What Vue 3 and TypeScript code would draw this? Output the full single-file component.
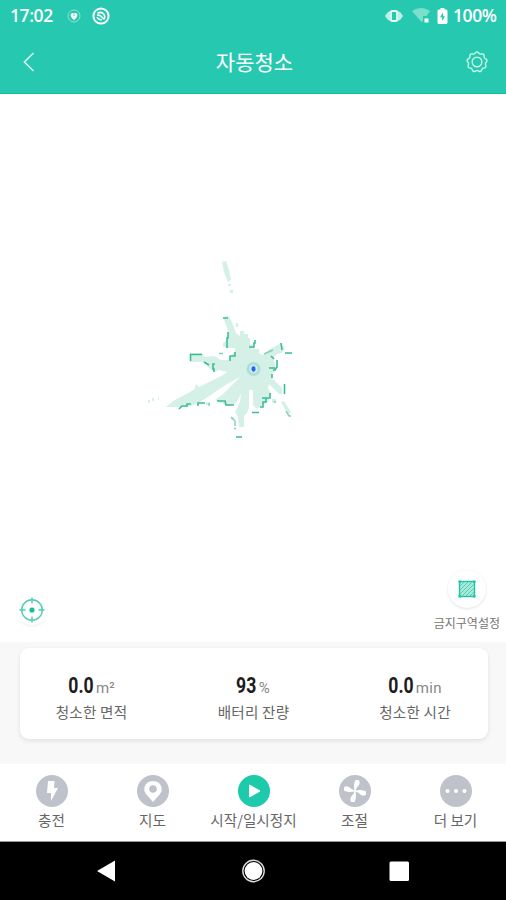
<script setup lang="ts">
interface Stat { value: string; unit: string; label: string }
interface Tab { icon: string; label: string; active?: boolean }

const stats: Stat[] = [
  { value: '0.0', unit: 'm²', label: '청소한 면적' },
  { value: '93', unit: '%', label: '배터리 잔량' },
  { value: '0.0', unit: 'min', label: '청소한 시간' },
]
const tabs: Tab[] = [
  { icon: 'charge', label: '충전' },
  { icon: 'map', label: '지도' },
  { icon: 'play', label: '시작/일시정지', active: true },
  { icon: 'fan', label: '조절' },
  { icon: 'more', label: '더 보기' },
]

// Scalloped outline of the settings gear.
const gear = Array.from({ length: 97 }, (_, i) => {
  const a = (i / 96) * Math.PI * 2
  const r = 9.3 + 0.8 * Math.cos(a * 9 + Math.PI / 2)
  return `${(11 + r * Math.cos(a)).toFixed(2)},${(11 + r * Math.sin(a)).toFixed(2)}`
}).join(' ')
</script>

<template>
  <div class="screen">
    <header class="top">
      <div class="status">
        <span class="clock">17:02</span>
        <svg class="s-shield" width="14" height="14" viewBox="0 0 14 14">
          <circle cx="7" cy="7" r="6" fill="none" stroke="#fff" stroke-opacity=".45" />
          <path d="M7 11C4.500 9.200 3.400 7.500 3.600 5.200Q5.200 3.400 7 4.600Q8.800 3.400 10.400 5.200C10.600 7.500 9.500 9.200 7 11Z" fill="#fff" />
          <circle cx="7" cy="6" r="1" fill="#8ee3d2" />
        </svg>
        <svg class="s-dnd" width="18" height="18" viewBox="0 0 18 18" fill="none" stroke="#fff">
          <circle cx="9" cy="9" r="7.600" stroke-width="2" />
          <path d="M5.500 6.500Q9 4 12 7.500Q13.200 9 12.500 11.500M5 8L8 8.500L12.500 12.500M5 10Q6.500 13 10 12.800" stroke-width="1.600" />
        </svg>
        <span class="grow"></span>
        <svg class="s-vibrate" width="18" height="14" viewBox="0 0 18 14">
          <path d="M5 2V12L2.500 10.500L0 7L2.500 3.500ZM13 2V12L15.500 10.500L18 7L15.500 3.500Z" fill="#bdefe5" />
          <rect x="6" y="2" width="6" height="10" rx="1" fill="none" stroke="#e8fffa" stroke-width="1.800" />
        </svg>
        <svg class="s-wifi" width="18" height="16" viewBox="0 0 18 16">
          <path d="M0 3Q9-3 18 3L14.500 8H11V13L9.500 14Z" fill="#7adfcb" />
          <rect x="12.500" y="10.500" width="4" height="4" fill="#fff" />
        </svg>
        <svg class="s-battery" width="11" height="18" viewBox="0 0 11 18">
          <path d="M3.500 1H7.500V2.500H9Q10.500 2.500 10.500 4V15.500Q10.500 17 9 17H2Q.5 17 .5 15.500V4Q.5 2.500 2 2.500H3.500Z" fill="#fff" />
          <path d="M6 5.500L3 10.200H5V14L8 9.200H6Z" fill="#24c8b0" />
        </svg>
        <span class="percent">100%</span>
      </div>
      <div class="titlebar">
        <svg width="12" height="20" viewBox="0 0 12 20" fill="none" stroke="#e5fff9" stroke-width="1.400">
          <path d="M10.500 1L1.300 10L10.500 19" />
        </svg>
        <h1>자동청소</h1>
        <svg width="22" height="22" viewBox="0 0 22 22" fill="none" stroke="#c8f5eb" stroke-width="1.400">
          <polygon :points="gear" stroke-linejoin="round" />
          <circle cx="11" cy="11" r="4.800" />
        </svg>
      </div>
    </header>

    <main class="map">
      <svg class="floor" width="506" height="548" viewBox="0 94 506 548">
        <g fill="#d5f0e7">
          <path d="M222 262L226 261L229 270L231 280L228 282L224 272Z" />
          <path d="M228 284h3v2h-3zM230 290h3v3h-3z" />
          <path d="M223 317L229 316L233 325L236 333L240 336V331H244V334H248V338H250V345H254V349H259V353L263 355L270 349L281 343L285 348L283 352L276 355L273 358L275 364L276 370L272 374V378L282 388V394H279L269 384L268 388L271 394L268 402L262 405L257 409L253 405V390H249V408L247 413L244 416V427H239L238 417L235 412L240 402L241 394L236 403L228 406L219 402L215 400L222 395L231 386L240 377L227 384L218 390L205 399L196 404L188 407H166L173 401L188 393L197 388L211 381L223 375L227 372L219 370L214 372L209 368L203 362H190V353H202L205 357L214 356L221 360H230V357L235 351V348H228L223 347V343L228 340V331Z" />
          <path d="M194 391L196 384L200 388L198 391ZM148 400h2v3h-2zM152 398h2v3h-2zM158 397h1v3h-1zM236 323h2v4h-2zM206 402h4v3h-4z" />
          <path d="M281 402L284 401L291 412L288 415ZM272 399h4v4h-4zM231 417h3v3h-3z" />
        </g>
        <g fill="none" stroke="#3dbc9b" stroke-width="1.600">
          <path d="M223 318h5M228 332v6h-1v10M255 340v3h-1v4h-5M235 352v4h-5v5M190.500 361v-6.500H202M204 362l5 3M215 364h-2v5h1v3" />
          <path d="M281 343l1 7M285 353h7M271 356l3 3M277 360v7l-2 3h-2M275 368h-6M272 374v4M284.500 384v10" />
          <path d="M179 409l3-3h5v-2h4M198 406v-3h7M218 400v1h7l1 4h8M252 412.500h7M260 407h3v-5h3v-4h4v-5M262 398h8M232 437h0M236 437h6" />
        </g>
        <g fill="none" stroke="#85cfb8" stroke-width="1.400">
          <path d="M219 353.500h4M209 403v3M234 428.500h2M231 417l4 4v5M286 411l3 5h2M274 402h2M264 354l9-4" />
        </g>
        <circle cx="253.500" cy="369" r="7" fill="#afe2d7" />
        <circle cx="253.500" cy="369" r="5.300" fill="#c2e8e5" stroke="#9bd4d0" stroke-width=".7" />
        <circle cx="253.500" cy="369" r="3.400" fill="#d9edfb" />
        <ellipse cx="253.500" cy="369" rx="2.100" ry="2.700" fill="#2467e8" />
      </svg>
      <div class="tools">
        <button class="round locate" aria-label="위치">
          <svg width="26" height="26" viewBox="0 0 26 26" fill="none" stroke="#4ccfb6" stroke-width="1.400">
            <circle cx="13" cy="13" r="10.300" /><path d="M13 .5v6M13 19.500v6M.5 13h6M19.500 13h6" />
            <circle cx="13" cy="13" r="2.600" fill="#16bea0" stroke="none" />
          </svg>
        </button>
        <div class="zone">
          <button class="round big" aria-label="금지구역설정">
            <svg width="18" height="18" viewBox="0 0 18 18">
              <rect x="1.500" y="1.500" width="15" height="15" fill="#a8e9da" stroke="#22c4a7" stroke-width="1.400" />
              <path d="M2 6L6 2M2 10L10 2M2 14L14 2M4 16L16 4M8 16L16 8M12 16L16 12" stroke="#4fd0b8" stroke-width="1" />
              <path d="M.5.5h2.500v2.500H.5zM15 .5h2.500v2.500h-2.500zM.5 15h2.500v2.500H.5zM15 15h2.500v2.500h-2.500z" fill="#22c4a7" />
            </svg>
          </button>
          <span>금지구역설정</span>
        </div>
      </div>
    </main>

    <section class="panel">
      <div class="card">
        <div v-for="s in stats" :key="s.label" class="stat">
          <div class="figure"><b>{{ s.value }}</b><span>{{ s.unit }}</span></div>
          <div class="label">{{ s.label }}</div>
        </div>
      </div>
    </section>

    <nav class="tabs">
      <div v-for="t in tabs" :key="t.icon" class="tab" :class="{ active: t.active }">
        <svg width="32" height="32" viewBox="0 0 32 32">
          <circle cx="16" cy="16" r="16" class="disc" />
          <path v-if="t.icon === 'charge'" d="M12 6H18.500L18 13H22L15 26V18H11Z" fill="#fff" />
          <template v-else-if="t.icon === 'map'">
            <path d="M16 27L9 19Q6.500 15.500 7.500 12Q9.500 6 16 6T24.500 12Q25.500 15.500 23 19Z" fill="#fff" />
            <circle cx="16" cy="14" r="3.800" class="disc" />
          </template>
          <path v-else-if="t.icon === 'play'" d="M11.500 10L22 16L11.500 22Z" fill="#fff" stroke="#fff" stroke-linejoin="round" />
          <g v-else-if="t.icon === 'fan'" fill="#fff">
            <path v-for="a in [0, 90, 180, 270]" :key="a" :transform="`rotate(${a} 16 16)`" d="M16 17C14.500 13 14.700 8 16.500 5H19.500Q21.500 6.500 20 10Q17.500 12 16 17Z" />
          </g>
          <g v-else fill="#fff"><circle cx="7.500" cy="16" r="2.100" /><circle cx="16" cy="16" r="2.100" /><circle cx="24.500" cy="16" r="2.100" /></g>
        </svg>
        <span>{{ t.label }}</span>
      </div>
    </nav>

    <footer class="android">
      <svg width="506" height="58" viewBox="0 0 506 58" fill="#fff">
        <path d="M97 29L115 18.500V39.500Z" />
        <circle cx="253.500" cy="29" r="10.700" fill="none" stroke="#ddd" stroke-width="1.400" />
        <circle cx="253.500" cy="29" r="8.900" />
        <rect x="389.500" y="19.500" width="19.500" height="19.500" rx="1.500" />
      </svg>
    </footer>
  </div>
</template>

<style>
body { margin: 0; background: #fff; }
</style>

<style scoped>
.screen {
  width: 506px; height: 900px; display: flex; flex-direction: column; overflow: hidden;
  font-family: Roboto, "Noto Sans CJK KR", sans-serif; color: #666;
}
svg { display: block; flex: none; }
.top { height: 94px; background: #26c9b0; color: #fff; box-shadow: inset 0 -1px #12bda2; flex: none; }
.status { height: 31px; display: flex; align-items: center; padding: 0 9px 0 10px; }
.clock, .percent { font: 600 17.500px/31px "Open Sans", sans-serif; letter-spacing: -.4px; white-space: nowrap; }
.clock { width: 42px; }
.percent { width: 44px; }
.s-shield { margin-left: 15px; }
.s-dnd { margin-left: 11px; }
.grow { flex: 1; }
.s-wifi { margin-left: 9px; }
.s-battery { margin: 0 5px 0 7px; }
.titlebar { height: 62px; display: flex; align-items: center; justify-content: space-between; padding: 0 18px 0 23px; }
h1 { margin: 0 0 2px 8px; font: 400 21px/30px "Noto Sans CJK KR", sans-serif; }
.map { height: 548px; display: flex; flex: none; flex-direction: column; position: relative; }
.tools { position: absolute; left: 17px; right: 6px; bottom: 10px; display: flex; align-items: flex-end; justify-content: space-between; }
.round { width: 30px; height: 30px; padding: 0; border: 0; border-radius: 50%; background: #fff; display: flex; align-items: center; justify-content: center; box-shadow: 0 2px 3px #0000000c; }
.locate { margin-bottom: 7px; }
.big { width: 38px; height: 38px; box-shadow: 0 1px 3px #0000001f; }
.zone { display: flex; flex-direction: column; align-items: center; gap: 6px; font: 400 12px/18px "Noto Sans CJK KR", sans-serif; color: #777; white-space: nowrap; }
.panel { height: 122px; box-sizing: border-box; padding: 6px 18px 24px 20px; background: #f8f8f8; flex: none; }
.card { height: 91px; display: grid; grid-template-columns: 143px 1fr 143px; background: #fff; border-radius: 9px; box-shadow: 0 2px 5px #00000018; }
.stat { display: flex; flex-direction: column; align-items: center; padding-top: 24px; }
.figure { height: 27px; display: flex; align-items: baseline; line-height: 27px; }
.figure b { font-size: 22px; color: #1c1c1c; transform: scaleX(.8); transform-origin: right; margin-left: -6px; }
.figure span { font-size: 15px; margin-left: 2px; color: #888; }
.label { font: 400 14.600px/26px "Noto Sans CJK KR", sans-serif; letter-spacing: .2px; color: #666; white-space: nowrap; }
.stat:last-child { padding-right: 3px; }
.stat:last-child .figure span { letter-spacing: .4px; }
.stat:nth-child(2) { padding-right: 1px; }
.tabs { height: 78px; display: grid; grid-template-columns: repeat(5, 1fr); box-sizing: border-box; padding: 11px 0 0 1px; background: #fff; border-bottom: 1px solid #999; flex: none; }
.tab { display: flex; flex-direction: column; align-items: center; font: 400 14.600px/26px "Noto Sans CJK KR", sans-serif; white-space: nowrap; }
.disc { fill: #bfc2ca; }
.active .disc { fill: #1dcaaa; }
.android { height: 58px; background: #000; flex: none; }
</style>
